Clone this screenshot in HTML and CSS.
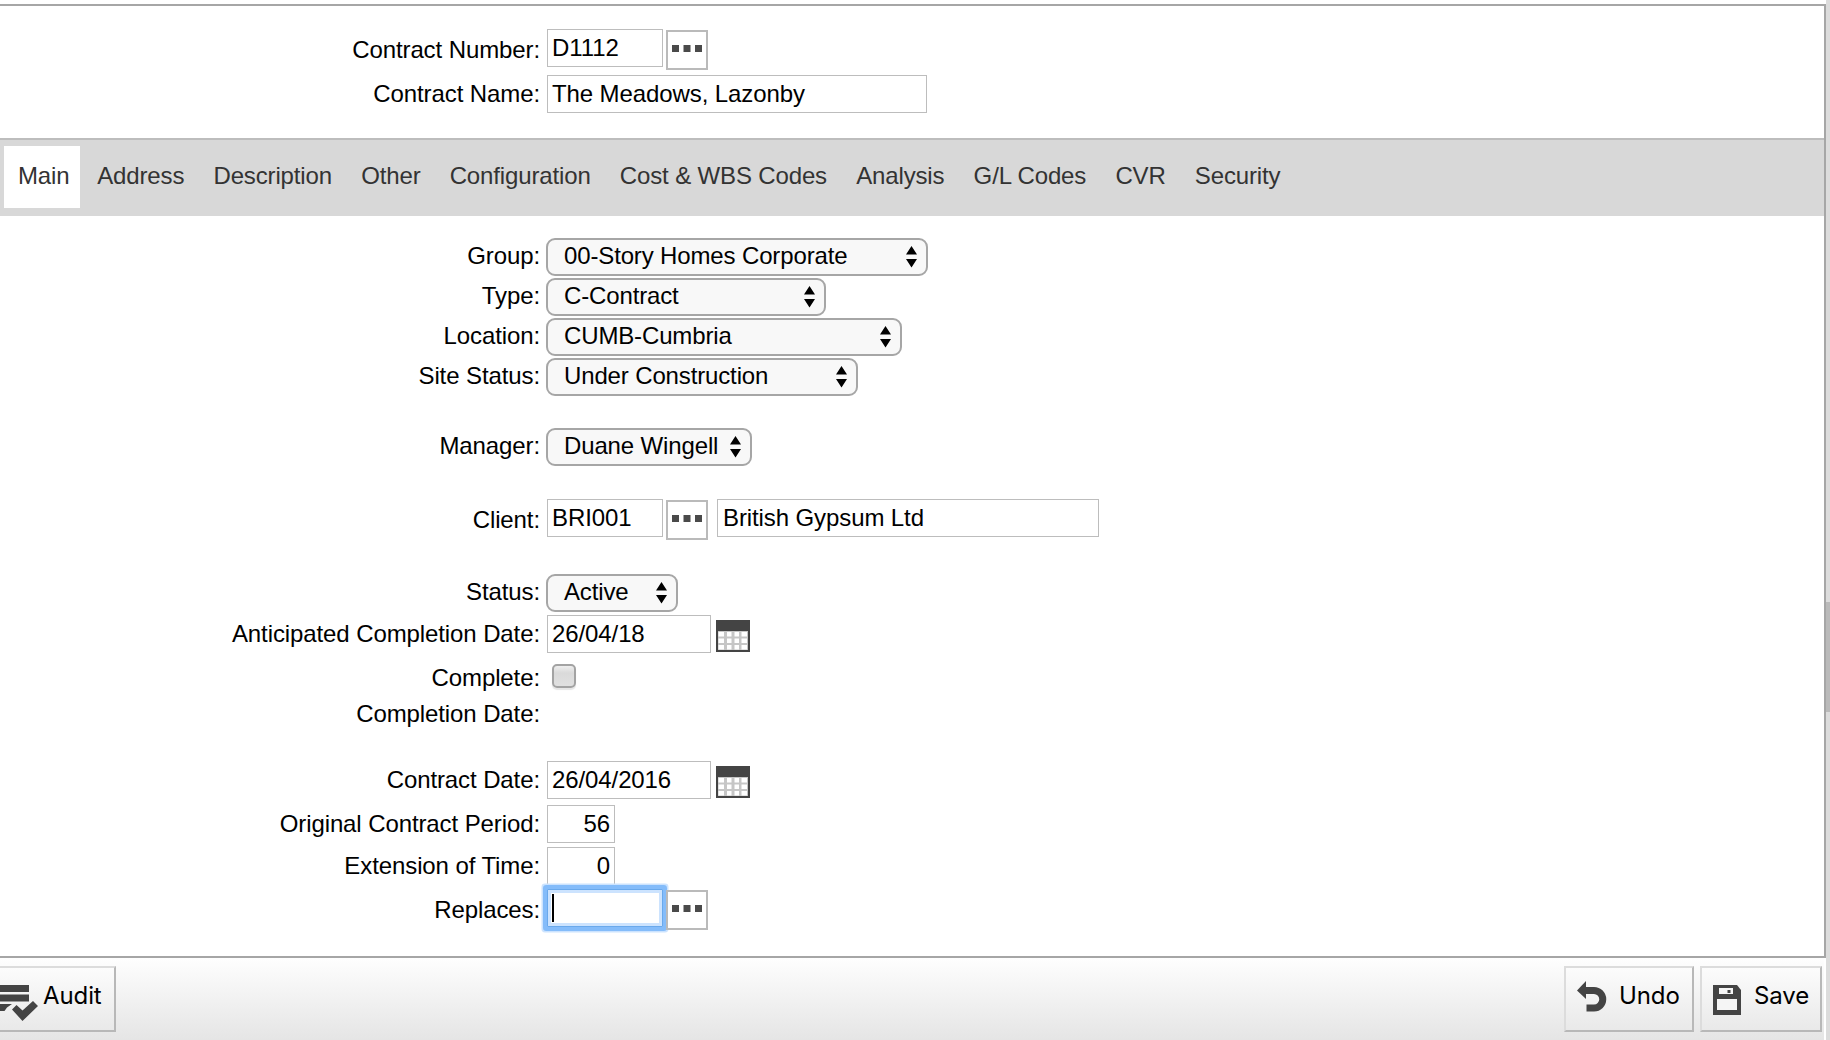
FILE: index.html
```html
<!DOCTYPE html>
<html lang="en">
<head>
<meta charset="utf-8">
<title>Contract Maintenance</title>
<link rel="stylesheet" href="styles.css">
</head>
<body>
<svg class="defs" width="0" height="0" aria-hidden="true">
  <symbol id="calendar" viewBox="0 0 34 32">
    <path fill="#444" d="M0 0h34v32H0z"/>
    <path fill="#c6c6c6" d="M2 11h30v19H2z"/>
    <path fill="#fff" d="M2.500 12h5.500v4.500H2.500zM11 12h4.500v4.500H11zM18.500 12h4.500v4.500h-4.500zM25.500 12h5.500v4.500h-5.500zM2.500 18.500h5.500v4.500H2.500zM11 18.500h4.500v4.500H11zM18.500 18.500h4.500v4.500h-4.500zM25.500 18.500h5.500v4.500h-5.500zM2.500 25h5.500v4.500H2.500zM11 25h4.500v4.500H11zM18.500 25h4.500v4.500h-4.500zM25.500 25h5.500v4.500h-5.500z"/>
  </symbol>
  <symbol id="dots" viewBox="0 0 30 7">
    <path fill="#4a4a4a" d="M0 0h7v7H0zM11.500 0h7v7h-7zM23 0h7v7h-7z"/>
  </symbol>
  <symbol id="arrows" viewBox="0 0 11 22">
    <path d="M5.500 0L11 8.500H0zM0 13h11L5.500 21.500z"/>
  </symbol>
</svg>
<div class="page">
  <main class="panel">
    <section class="header">
      <div class="row lookup">
        <label class="label">Contract Number:</label>
        <div class="field code">D1112</div>
        <button class="more"><svg><use href="#dots"/></svg></button>
      </div>
      <div class="row name-row">
        <label class="label">Contract Name:</label>
        <div class="field name">The Meadows, Lazonby</div>
      </div>
    </section>
    <nav class="tabs">
      <a class="tab active">Main</a><a class="tab">Address</a><a class="tab">Description</a><a class="tab">Other</a><a class="tab">Configuration</a><a class="tab">Cost &amp; WBS Codes</a><a class="tab">Analysis</a><a class="tab">G/L Codes</a><a class="tab">CVR</a><a class="tab">Security</a>
    </nav>
    <section class="form">
      <div class="row choice">
        <label class="label">Group:</label>
        <div class="select group">00-Story Homes Corporate<svg><use href="#arrows"/></svg></div>
      </div>
      <div class="row choice">
        <label class="label">Type:</label>
        <div class="select type">C-Contract<svg><use href="#arrows"/></svg></div>
      </div>
      <div class="row choice">
        <label class="label">Location:</label>
        <div class="select location">CUMB-Cumbria<svg><use href="#arrows"/></svg></div>
      </div>
      <div class="row choice">
        <label class="label">Site Status:</label>
        <div class="select site">Under Construction<svg><use href="#arrows"/></svg></div>
      </div>
      <div class="row choice manager-row">
        <label class="label">Manager:</label>
        <div class="select manager">Duane Wingell<svg><use href="#arrows"/></svg></div>
      </div>
      <div class="row lookup client-row">
        <label class="label">Client:</label>
        <div class="field code">BRI001</div>
        <button class="more"><svg><use href="#dots"/></svg></button>
        <div class="field client">British Gypsum Ltd</div>
      </div>
      <div class="row choice status-row">
        <label class="label">Status:</label>
        <div class="select status">Active<svg><use href="#arrows"/></svg></div>
      </div>
      <div class="row anticipated-row">
        <label class="label">Anticipated Completion Date:</label>
        <div class="field date">26/04/18</div>
        <svg class="calendar"><use href="#calendar"/></svg>
      </div>
      <div class="row complete-row">
        <label class="label">Complete:</label>
        <span class="check"></span>
      </div>
      <div class="row completion-row">
        <label class="label">Completion Date:</label>
      </div>
      <div class="row contract-date-row">
        <label class="label">Contract Date:</label>
        <div class="field date">26/04/2016</div>
        <svg class="calendar"><use href="#calendar"/></svg>
      </div>
      <div class="row period-row">
        <label class="label">Original Contract Period:</label>
        <div class="field number">56</div>
      </div>
      <div class="row extension-row">
        <label class="label">Extension of Time:</label>
        <div class="field number">0</div>
      </div>
      <div class="row lookup replaces-row">
        <label class="label">Replaces:</label>
        <div class="field code focused"><span class="caret"></span></div>
        <button class="more"><svg><use href="#dots"/></svg></button>
      </div>
    </section>
  </main>
  <footer class="footer">
    <button class="action audit">
      <svg width="38" height="38" viewBox="0 0 38 38" fill="#444"><path d="M0 2h29v7H0zM0 11.500h29v7H0zM0 21h12l-5 3.500L4.500 28H0zM12 26.500l4.500-4.500 6 5.500L33 18l5 5-15.500 15z"/></svg>
      Audit
    </button>
    <div class="spacer"></div>
    <button class="action undo">
      <svg width="32" height="32" viewBox="0 0 32 32" fill="none" stroke="#444"><path d="M8 9.500h9a8.700 8.700 0 0 1 0 17.500H9.500" stroke-width="7"/><path d="M0 9.500L9 0v18z" fill="#444" stroke="none"/></svg>
      Undo
    </button>
    <button class="action save">
      <svg width="30" height="30" viewBox="0 0 30 30"><path fill="#444" d="M1 0h24l4 5v25H1z"/><path fill="#f5f5f5" d="M7 3h14v6H7zM5 14h20v11H5z"/><path fill="#444" d="M15.500 5h3v3h-3z"/></svg>
      Save
    </button>
  </footer>
  <div class="scrollbar"><div class="thumb"></div></div>
</div>
</body>
</html>
```
FILE: styles.css
```css
* {
  box-sizing: border-box;
}

body {
  margin: 0;
  background: #fff;
  color: #000;
  font: 24px/28px "Liberation Sans", Arial, sans-serif;
  letter-spacing: -0.1px;
  overflow: hidden;
}

.defs {
  display: block;
}

.page {
  display: grid;
  grid-template-columns: 1826px 4px;
  grid-template-rows: 958px 82px;
  width: 1830px;
  height: 1040px;
}

.panel {
  margin-top: 4px;
  border: 2px solid #a6a6a6;
  border-left: 0;
}

.header {
  height: 132px;
  padding-top: 23px;
}

.row {
  display: flex;
  align-items: flex-start;
  height: 38px;
}

.label {
  width: 540px;
  margin-right: 7px;
  padding-top: 5px;
  text-align: right;
  white-space: nowrap;
}

.lookup .label {
  padding-top: 7px;
}

.choice .label {
  padding-top: 4px;
}

.field {
  height: 38px;
  padding: 4px;
  border: 1px solid #bdbdbd;
  background: #fff;
  white-space: nowrap;
}

.code {
  width: 116px;
}

.name {
  width: 380px;
}

.client {
  width: 382px;
  margin-left: 9px;
  padding-left: 5px;
}

.date {
  width: 164px;
}

.number {
  width: 68px;
  text-align: right;
}

.more {
  display: flex;
  align-items: flex-start;
  justify-content: center;
  width: 42px;
  height: 40px;
  margin: 1px 0 0 3px;
  padding: 13px 0 0;
  border: 2px solid #bababa;
  background: #fff;
}

.more svg {
  width: 30px;
  height: 7px;
}

.name-row {
  margin-top: 8px;
}

.tabs {
  display: flex;
  height: 78px;
  padding: 6px 4px 8px;
  gap: 5.2px;
  border-top: 2px solid #bdbdbd;
  background: #d8d8d8;
  color: #333;
  letter-spacing: -0.14px;
}

.tab {
  padding: 16px 12px 0;
}

.tab.active {
  width: 76px;
  padding: 16px 0 0 14px;
  background: #fff;
}

.form {
  padding-top: 22px;
}

.select {
  display: flex;
  justify-content: space-between;
  height: 38px;
  margin-left: -1px;
  padding: 2px 9px 0 16px;
  border: 2px solid #a6a6a6;
  border-radius: 9px;
  background: #f8f8f8;
  letter-spacing: -0.14px;
  white-space: nowrap;
}

.select svg {
  width: 11px;
  height: 22px;
  margin-top: 4px;
}

.group {
  width: 382px;
}

.type {
  width: 280px;
}

.location {
  width: 356px;
}

.site {
  width: 312px;
}

.manager {
  width: 206px;
}

.status {
  width: 132px;
}

.choice + .choice {
  margin-top: 2px;
}

.choice + .manager-row {
  margin-top: 32px;
}

.client-row {
  margin-top: 33px;
}

.status-row {
  margin-top: 37px;
}

.anticipated-row {
  margin-top: 3px;
}

.complete-row {
  margin-top: 6px;
}

.completion-row {
  margin-top: -2px;
}

.contract-date-row {
  margin-top: 28px;
}

.period-row {
  margin-top: 6px;
}

.extension-row,
.replaces-row {
  margin-top: 4px;
}

.calendar {
  width: 34px;
  height: 32px;
  margin: 5px 0 0 5px;
}

.check {
  width: 24px;
  height: 24px;
  margin: 5px 0 0 5px;
  border: 2px solid #a3a3a3;
  border-radius: 5px;
  background: linear-gradient(#eee, #dadada 35%, #e0e0e0);
  box-shadow: 0 2px 1px #e6e6e6;
}

.focused {
  border-color: #6aa9ec;
  border-radius: 1px;
  box-shadow: 0 0 0 4px #84bcfa, 0 0 0 5.5px #cce3fe, inset 0 0 0 3px #cce3fe;
}

.caret {
  display: block;
  width: 2px;
  height: 28px;
  background: #000;
}

.footer {
  display: flex;
  padding-top: 8px;
  border-right: 2px solid #fff;
  background: linear-gradient(#fefefe, #e5e5e5);
}

.action {
  display: flex;
  height: 66px;
  padding: 0;
  border: 2px solid;
  border-color: #dcdcdc #b8b8b8 #b8b8b8 #dcdcdc;
  background: linear-gradient(#fcfcfc, #e9e9e9);
  color: #000;
  font: 24px/56px Inter, "Liberation Sans", sans-serif;
  letter-spacing: -0.1px;
}

.spacer {
  flex: 1;
}

.audit {
  width: 116px;
  border-left: 0;
}

.audit svg {
  margin: 15px 5px 0 0;
}

.undo {
  width: 130px;
  padding-left: 11px;
}

.undo svg {
  margin: 13px 10px 0 0;
}

.save {
  width: 122px;
  margin: 0 2px 0 6px;
  padding-left: 10px;
}

.save svg {
  margin: 17px 12px 0 0;
}

.scrollbar {
  grid-column: 2;
  grid-row: 1 / 3;
  background: #dcdcdc;
}

.thumb {
  height: 110px;
  margin-top: 602px;
  background: #bababa;
}
```
